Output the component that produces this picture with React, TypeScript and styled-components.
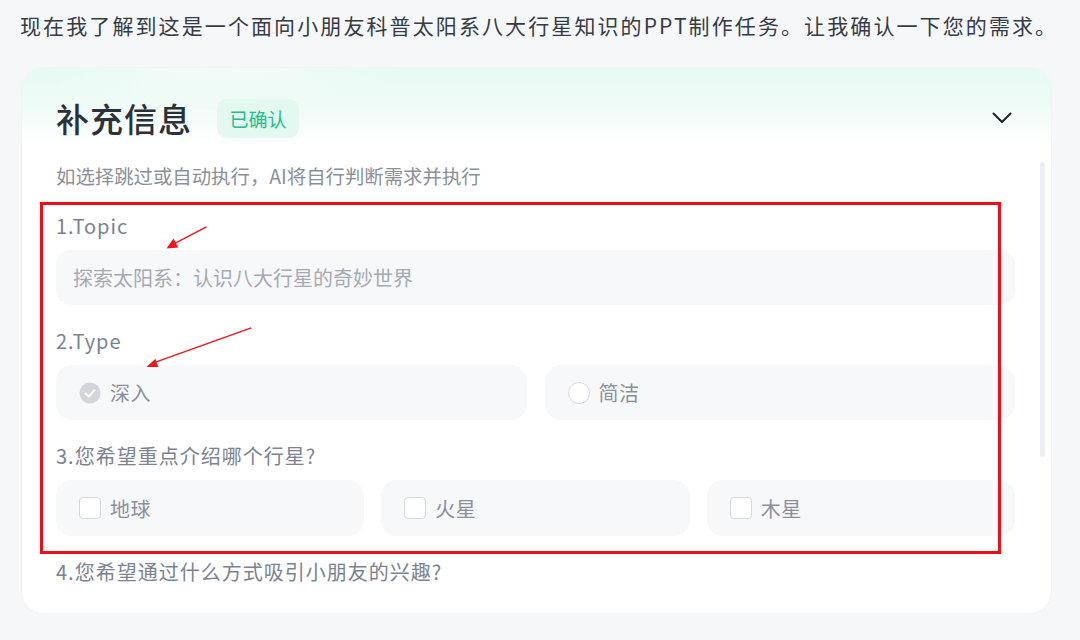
import React from 'react';
import styled, { createGlobalStyle } from 'styled-components';

const FONT = `"Noto Sans CJK SC", "Noto Sans", sans-serif`;

const GlobalStyle = createGlobalStyle`
  html, body {
    margin: 0;
    padding: 0;
    background: #f6f7f9;
  }
  * {
    box-sizing: border-box;
  }
`;

const typeOptions = [
  { label: '深入', checked: true },
  { label: '简洁', checked: false },
];

const planets = ['地球', '火星', '木星'];

export default function App() {
  return (
    <PageS>
      <GlobalStyle />
      <IntroS>现在我了解到这是一个面向小朋友科普太阳系八大行星知识的PPT制作任务。让我确认一下您的需求。</IntroS>
      <CardS>
        <HeaderS>
          <TitleS>补充信息</TitleS>
          <BadgeS>已确认</BadgeS>
          <ChevronS width='20' height='12' viewBox='0 0 20 12'>
            <polyline points='1.5,1.5 10,10 18.5,1.5' />
          </ChevronS>
        </HeaderS>
        <BodyS>
          <HintS>如选择跳过或自动执行，AI将自行判断需求并执行</HintS>
          <FieldS>
            <LabelS>1.Topic</LabelS>
            <InputBoxS>探索太阳系：认识八大行星的奇妙世界</InputBoxS>
          </FieldS>
          <FieldS>
            <LabelS>2.Type</LabelS>
            <OptionGridS $cols={2} $gap={18}>
              {typeOptions.map((o) => (
                <OptionS key={o.label}>
                  {o.checked ? (
                    <svg width='22' height='22' viewBox='0 0 22 22'>
                      <circle cx='11' cy='11' r='10.5' fill='#d3d5da' />
                      <polyline
                        points='6.5,11.5 9.8,14.6 15.5,8.2'
                        fill='none'
                        stroke='#fff'
                        strokeWidth='2'
                        strokeLinecap='round'
                        strokeLinejoin='round'
                      />
                    </svg>
                  ) : (
                    <RadioS />
                  )}
                  <OptionTextS>{o.label}</OptionTextS>
                </OptionS>
              ))}
            </OptionGridS>
          </FieldS>
          <FieldS>
            <LabelS>3.您希望重点介绍哪个行星?</LabelS>
            <OptionGridS $cols={3} $gap={17}>
              {planets.map((p) => (
                <OptionS key={p} $tall>
                  <CheckboxS />
                  <OptionTextS>{p}</OptionTextS>
                </OptionS>
              ))}
            </OptionGridS>
          </FieldS>
          <FieldS>
            <LabelS>4.您希望通过什么方式吸引小朋友的兴趣?</LabelS>
          </FieldS>
        </BodyS>
        <ScrollThumbS />
      </CardS>

      {/* red annotations drawn over the screenshot */}
      <MarkBoxS />
      <ArrowsS width='1080' height='640' viewBox='0 0 1080 640'>
        <polygon points='206,226.2 206.8,227.6 176,243.6 178.5,247.5 166.5,248.5 173.5,238.6 175.5,242.3' fill='#f0151b' />
        <polygon points='251,327.2 251.5,328.6 156.5,362.6 158.5,367 146.5,367 155.5,358.8 156,361.2' fill='#f0151b' />
      </ArrowsS>
    </PageS>
  );
}

const PageS = styled.div`
  position: relative;
  width: 1080px;
  height: 640px;
  overflow: hidden;
  padding: 10px 28px 0 20px;
  background: #f6f7f9;
  font-family: ${FONT};
`;

const IntroS = styled.div`
  font-size: 21px;
  line-height: 30px;
  letter-spacing: 2.1px;
  color: #353b45;
  white-space: nowrap;
`;

const CardS = styled.div`
  position: relative;
  width: 1031px;
  height: 547px;
  margin: 27px 0 0 1px;
  border-radius: 22px;
  overflow: hidden;
  background: #fff;
  border: 1px solid #f1f3f5;
`;

const HeaderS = styled.div`
  display: flex;
  align-items: center;
  height: 78px;
  padding: 22px 39px 0 34px;
  background:
    radial-gradient(ellipse 260px 60px at 200px 0px, rgba(255, 255, 255, 0.5), transparent 70%),
    linear-gradient(180deg, #e6faf3 0%, #f0fbf7 50%, #ffffff 100%);
`;

const TitleS = styled.div`
  font-size: 33px;
  line-height: 40px;
  font-weight: 500;
  color: #2b313b;
  letter-spacing: 1px;
`;

const BadgeS = styled.div`
  display: flex;
  align-items: center;
  justify-content: center;
  width: 82px;
  height: 39px;
  margin-left: 25px;
  border-radius: 10px;
  background: #e3f8ef;
  color: #22c08a;
  font-size: 19px;
`;

const ChevronS = styled.svg`
  margin-left: auto;
  polyline {
    fill: none;
    stroke: #1f2329;
    stroke-width: 2;
    stroke-linecap: round;
    stroke-linejoin: round;
  }
`;

const BodyS = styled.div`
  padding: 16px 36px 0 34px;
`;

const HintS = styled.div`
  font-size: 19.4px;
  line-height: 28px;
  color: #8a909a;
`;

const FieldS = styled.div`
  display: flex;
  flex-direction: column;
  gap: 10px;
  margin-top: 22px;
`;

const LabelS = styled.div`
  font-size: 20px;
  line-height: 28px;
  letter-spacing: 1px;
  color: #7b8290;
`;

const InputBoxS = styled.div`
  display: flex;
  align-items: center;
  height: 55px;
  padding-left: 17px;
  border-radius: 15px;
  background: #f7f8fa;
  font-size: 20px;
  letter-spacing: 0;
  color: #a5aab2;
`;

const OptionGridS = styled.div<{ $cols: number; $gap: number }>`
  display: grid;
  grid-template-columns: repeat(${(p) => p.$cols}, 1fr);
  gap: ${(p) => p.$gap}px;
`;

const OptionS = styled.div<{ $tall?: boolean }>`
  display: flex;
  align-items: center;
  gap: 9px;
  height: ${(p) => (p.$tall ? 56 : 55)}px;
  padding-left: 23px;
  border-radius: 16px;
  background: #f7f8fa;
`;

const OptionTextS = styled.span`
  font-size: 20px;
  letter-spacing: 0.5px;
  color: #8a909b;
`;

const RadioS = styled.span`
  width: 22px;
  height: 22px;
  border-radius: 50%;
  border: 1.5px solid #d8dade;
  background: #fff;
`;

const CheckboxS = styled.span`
  width: 22px;
  height: 22px;
  border-radius: 4px;
  border: 1.5px solid #d5d8dd;
  background: #fff;
`;

const ScrollThumbS = styled.div`
  position: absolute;
  top: 94px;
  right: 6px;
  width: 5px;
  height: 295px;
  border-radius: 3px;
  background: #eceef1;
`;

const MarkBoxS = styled.div`
  position: absolute;
  left: 40px;
  top: 202px;
  width: 961px;
  height: 352px;
  border: 3px solid #f10d17;
  pointer-events: none;
`;

const ArrowsS = styled.svg`
  position: absolute;
  left: 0;
  top: 0;
  pointer-events: none;
`;
